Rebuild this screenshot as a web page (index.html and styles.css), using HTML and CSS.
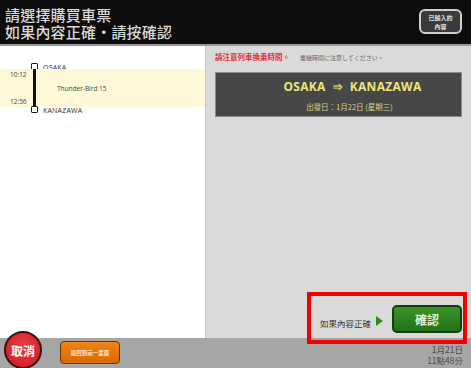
FILE: index.html
```html
<!DOCTYPE html>
<html lang="zh-Hant">
<head>
<meta charset="utf-8">
<link rel="stylesheet" href="styles.css">
</head>
<body>
<div class="screen">
  <header class="header">
    <div class="title">
      <div class="title-line">請選擇購買車票</div>
      <div class="title-line">如果內容正確・請按確認</div>
    </div>
    <div class="entered-btn"><span>已輸入的</span><span>內容</span></div>
  </header>
  <main class="main">
    <section class="route">
      <div class="stop-row top">
        <span class="time"></span>
        <span class="node"><span class="sq"></span></span>
        <span class="station">OSAKA</span>
      </div>
      <div class="leg">
        <div class="times"><span>10:12</span><span>12:56</span></div>
        <div class="bar-col"><span class="bar"></span></div>
        <div class="train">Thunder-Bird 15</div>
      </div>
      <div class="stop-row bottom">
        <span class="time"></span>
        <span class="node"><span class="sq"></span></span>
        <span class="station">KANAZAWA</span>
      </div>
    </section>
    <section class="detail">
      <div class="notice"><span class="warn">請注意列車換乘時間。</span><span class="jp">乗継時間に注意してください。</span></div>
      <div class="ticket">
        <div class="ticket-route">OSAKA <span class="arrow">⇒</span> KANAZAWA</div>
        <div class="ticket-date">出發日：1月22日 (星期三)</div>
      </div>
      <div class="spacer"></div>
      <div class="confirm-row">
        <span class="confirm-hint">如果內容正確</span>
        <span class="tri"></span>
        <button class="confirm-btn">確認</button>
      </div>
    </section>
  </main>
  <footer class="footer">
    <button class="cancel-btn">取消</button>
    <button class="back-btn">返回到前一畫面</button>
    <div class="clock"><span>1月21日</span><span>11點48分</span></div>
  </footer>
  <div class="highlight"></div>
</div>
</body>
</html>
```

FILE: styles.css
```css
* { box-sizing: border-box; }
html, body { margin: 0; padding: 0; }
body {
  width: 471px;
  height: 368px;
  overflow: hidden;
  font-family: "Open Sans", "Noto Sans CJK TC", sans-serif;
  background: #a6a6a6;
}
.screen {
  position: relative;
  width: 471px;
  height: 368px;
  display: flex;
  flex-direction: column;
}
.header {
  height: 46px;
  background: #0d0d0d;
  border-bottom: 2px solid #9a9a9a;
  display: flex;
  justify-content: space-between;
  align-items: flex-start;
  padding: 6px 9px 0 5px;
}
.title-line {
  font-family: "Noto Sans CJK TC", sans-serif;
  color: #d8d8d8;
  font-size: 15px;
  line-height: 17px;
  font-weight: 500;
  letter-spacing: 0.2px;
}
.entered-btn {
  margin-top: 3px;
  width: 43px;
  height: 25px;
  border: 2px solid #cfcfcf;
  border-radius: 6px;
  background: #3a3a3a;
  display: flex;
  flex-direction: column;
  align-items: center;
  justify-content: center;
  font-family: "Noto Sans CJK TC", sans-serif;
  font-size: 6px;
  line-height: 9px;
  color: #e0e0e0;
  font-weight: 700;
}
.main {
  flex: 1;
  display: flex;
  min-height: 0;
}
.route {
  width: 205px;
  background: #ffffff;
  padding-top: 17px;
  display: flex;
  flex-direction: column;
}
.stop-row {
  display: flex;
  align-items: center;
  height: 7px;
}
.stop-row .time { width: 30px; }
.node { width: 8px; display: flex; justify-content: center; }
.sq {
  width: 7px;
  height: 7px;
  border: 1.5px solid #222;
  background: #fff;
  border-radius: 1px;
}
.station {
  margin-left: 5px;
  font-size: 7px;
  color: #333;
  letter-spacing: 0.2px;
}
.stop-row.top .station { margin-top: 2px; }
.stop-row.bottom .station { margin-top: 1px; }
.leg {
  height: 38px;
  margin-top: -1px;
  margin-bottom: -1px;
  background: #fdf9d8;
  display: flex;
}
.times {
  width: 30px;
  padding: 2px 0 0 10px;
  display: flex;
  flex-direction: column;
  justify-content: space-between;
  font-size: 6.5px;
  line-height: 8px;
  color: #444;
}
.times span:last-child { margin-bottom: 1px; }
.bar-col { width: 8px; display: flex; justify-content: center; }
.bar { width: 3px; background: #111; height: 100%; }
.train {
  margin-left: 19px;
  margin-top: 15px;
  font-size: 6.5px;
  color: #444;
}
.detail {
  flex: 1;
  background: #dadada;
  border-left: 1px solid #c8c8c8;
  display: flex;
  flex-direction: column;
  padding: 5px 9px 5px 9px;
}
.notice {
  display: flex;
  align-items: baseline;
  height: 11px;
  font-family: "Noto Sans CJK TC", sans-serif;
}
.warn { color: #e0303a; font-size: 7.5px; font-weight: 700; }
.jp { color: #666; font-size: 6px; margin-left: 10px; }
.ticket {
  margin-top: 10px;
  height: 45px;
  background: #474747;
  border: 1px solid #8a8a8a;
  display: flex;
  flex-direction: column;
  align-items: center;
  padding: 7px 0 0 28px;
}
.ticket-route {
  font-family: "Open Sans", sans-serif;
  font-weight: 700;
  color: #ebe77a;
  font-size: 12px;
  line-height: 14px;
  letter-spacing: 0.3px;
  word-spacing: 3px;
}
.arrow { font-size: 11px; }
.ticket-date {
  margin-top: 8px;
  font-family: "Noto Sans CJK TC", sans-serif;
  color: #d8d48a;
  font-size: 7.5px;
  line-height: 9px;
  margin-right: 6px;
}
.spacer { flex: 1; }
.confirm-row {
  display: flex;
  align-items: center;
  justify-content: flex-end;
}
.confirm-hint {
  font-family: "Noto Sans CJK TC", sans-serif;
  font-size: 8.5px;
  color: #333;
  margin-top: 8px;
}
.tri {
  width: 0;
  height: 0;
  border-top: 5px solid transparent;
  border-bottom: 5px solid transparent;
  border-left: 7px solid #2f8a1f;
  margin: 4px 9px 0 5px;
}
.confirm-btn {
  width: 70px;
  height: 28px;
  border: 2px solid #173d0e;
  border-radius: 5px;
  background: linear-gradient(#3a9526, #23711a);
  color: #e6f2cf;
  font-family: "Noto Sans CJK TC", sans-serif;
  font-size: 12px;
  font-weight: 700;
  padding: 0;
}
.footer {
  height: 30px;
  display: flex;
  align-items: flex-end;
  padding: 0 8px 0 4px;
  background: #a6a6a6;
}
.cancel-btn {
  width: 38px;
  height: 38px;
  border-radius: 50%;
  border: 2px solid #3a1010;
  background: radial-gradient(circle at 50% 40%, #f0404a, #c8161f);
  color: #fff;
  font-family: "Noto Sans CJK TC", sans-serif;
  font-size: 12px;
  font-weight: 700;
  padding: 0;
  margin-bottom: -1px;
}
.back-btn {
  margin-left: 18px;
  margin-bottom: 4px;
  width: 60px;
  height: 23px;
  border-radius: 4px;
  border: 1.5px solid #6a3400;
  background: linear-gradient(#f08218, #d86a00);
  color: #fde6c8;
  font-family: "Noto Sans CJK TC", sans-serif;
  font-size: 5.5px;
  font-weight: 700;
  padding: 0;
}
.clock {
  margin-left: auto;
  display: flex;
  flex-direction: column;
  align-items: flex-end;
  font-family: "Noto Sans CJK TC", sans-serif;
  font-size: 8.5px;
  line-height: 11px;
  color: #4a4a4a;
  padding-bottom: 2px;
}
.highlight {
  position: absolute;
  left: 307px;
  top: 292px;
  width: 160px;
  height: 52px;
  border: 4px solid #f00000;
  pointer-events: none;
}
```
